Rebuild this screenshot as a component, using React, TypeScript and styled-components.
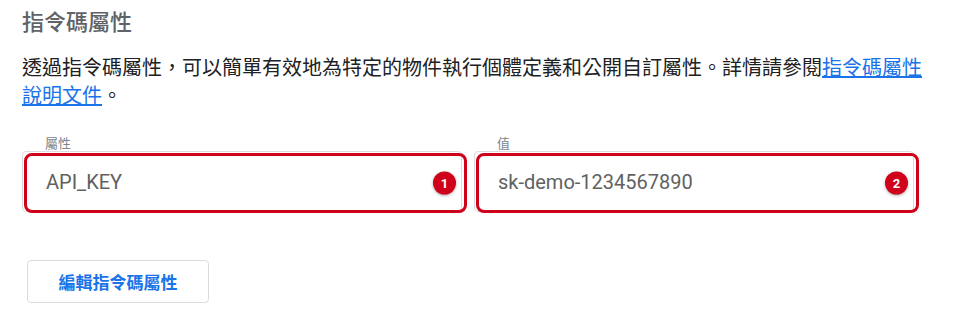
import styled, { createGlobalStyle } from 'styled-components';

const GlobalStyle = createGlobalStyle`
  body {
    margin: 0;
    background: #fff;
    font-family: Roboto, "Noto Sans CJK TC", sans-serif;
  }
`;

const Page = styled.section`
  padding: 8px 22px 0;
  width: 968px;
  box-sizing: border-box;
`;

const Title = styled.h2`
  margin: 0;
  font-size: 22px;
  line-height: 30px;
  font-weight: 500;
  color: #5f6368;
`;

const Description = styled.p`
  margin: 16px 0 0;
  max-width: 908px;
  font-size: 20px;
  line-height: 28px;
  color: #202124;
`;

const DocLink = styled.a`
  color: #1a73e8;
  text-decoration: underline;
`;

const Fields = styled.div`
  display: grid;
  grid-template-columns: 440px 440px;
  column-gap: 12px;
  margin-top: 26px;
`;

const Field = styled.label`
  display: flex;
  flex-direction: column;
`;

const Label = styled.span`
  font-size: 13px;
  line-height: 15px;
  padding-left: 23px;
  color: #80868b;
`;

const InputBox = styled.div`
  position: relative;
  height: 61px;
  border: 1px solid #dadce0;
  border-radius: 4px;
  box-sizing: border-box;
  display: flex;
  align-items: center;
`;

const Input = styled.input`
  border: none;
  outline: none;
  background: transparent;
  width: 100%;
  padding: 0 23px;
  font-family: Roboto, sans-serif;
  font-size: 20px;
  color: #616161;
`;

const Highlight = styled.div`
  position: absolute;
  top: 1px;
  bottom: -2px;
  left: 1px;
  right: -6px;
  border: 3px solid #d0021b;
  border-radius: 8px;
  pointer-events: none;
`;

const Badge = styled.span`
  position: absolute;
  right: 8px;
  top: 50%;
  transform: translateY(-50%);
  width: 23px;
  height: 23px;
  border-radius: 50%;
  background: #d0021b;
  color: #fff;
  font-size: 13px;
  font-weight: 700;
  display: flex;
  align-items: center;
  justify-content: center;
  box-shadow: 0 1px 3px rgba(0, 0, 0, 0.35);
`;

const EditButton = styled.button`
  margin: 48px 0 0 5px;
  width: 182px;
  height: 43px;
  background: #fff;
  border: 1px solid #dadce0;
  border-radius: 4px;
  color: #1a73e8;
  font-family: Roboto, "Noto Sans CJK TC", sans-serif;
  font-size: 17px;
  font-weight: 600;
  cursor: pointer;
`;

const fields = [
  { label: '屬性', value: 'API_KEY' },
  { label: '值', value: 'sk-demo-1234567890' },
];

export default function App() {
  return (
    <>
      <GlobalStyle />
      <Page>
        <Title>指令碼屬性</Title>
        <Description>
          透過指令碼屬性，可以簡單有效地為特定的物件執行個體定義和公開自訂屬性。詳情請參閱
          <DocLink href="#">指令碼屬性說明文件</DocLink>。
        </Description>
        <Fields>
          {fields.map((f, i) => (
            <Field key={f.label}>
              <Label>{f.label}</Label>
              <InputBox>
                <Input readOnly defaultValue={f.value} />
                <Highlight>
                  <Badge>{i + 1}</Badge>
                </Highlight>
              </InputBox>
            </Field>
          ))}
        </Fields>
        <EditButton>編輯指令碼屬性</EditButton>
      </Page>
    </>
  );
}
